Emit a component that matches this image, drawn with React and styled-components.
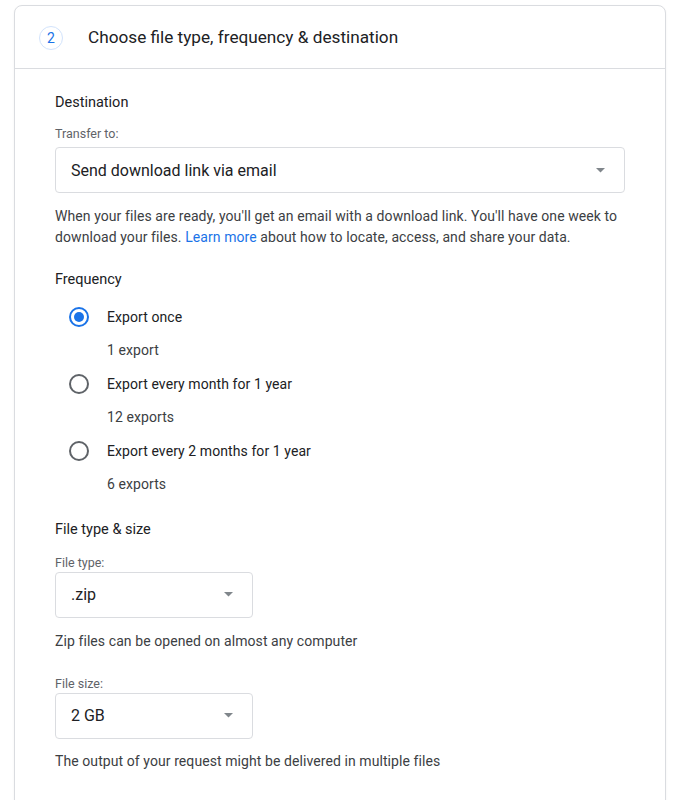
import React from 'react'
import styled, { createGlobalStyle } from 'styled-components'

const GlobalStyle = createGlobalStyle`
  body {
    margin: 0;
    background: #fff;
    font-family: Roboto, "Liberation Sans", Arial, sans-serif;
    color: #3c4043;
  }
`

const frequencies = [
  { label: 'Export once', sub: '1 export', checked: true },
  { label: 'Export every month for 1 year', sub: '12 exports' },
  { label: 'Export every 2 months for 1 year', sub: '6 exports' },
]

function Arrow() {
  return (
    <svg width="9" height="5" viewBox="0 0 9 5">
      <path d="M0 0 L9 0 L4.5 4.5 Z" fill="#80868b" />
    </svg>
  )
}

function Select({ value, width }) {
  return (
    <SelectBox width={width}>
      <span>{value}</span>
      <Arrow />
    </SelectBox>
  )
}

export default function App() {
  return (
    <>
      <GlobalStyle />
      <Page>
        <Card>
          <Header>
            <StepBadge>2</StepBadge>
            <Title>Choose file type, frequency &amp; destination</Title>
          </Header>
          <Body>
            <SectionTitle>Destination</SectionTitle>
            <FieldLabel gap={12}>Transfer to:</FieldLabel>
            <Select value="Send download link via email" />
            <Description gap={13}>
              When your files are ready, you'll get an email with a download link. You'll have one week to
              download your files. <a href="#">Learn more</a> about how to locate, access, and share your data.
            </Description>

            <SectionTitle gap={21}>Frequency</SectionTitle>
            <RadioList>
              {frequencies.map((f) => (
                <React.Fragment key={f.label}>
                  <RadioRow>
                    <Radio checked={f.checked} />
                    <span>{f.label}</span>
                  </RadioRow>
                  <SubLine>{f.sub}</SubLine>
                </React.Fragment>
              ))}
            </RadioList>

            <SectionTitle gap={17}>File type &amp; size</SectionTitle>
            <FieldLabel gap={14} tight>File type:</FieldLabel>
            <Select value=".zip" width={198} />
            <Hint gap={13}>Zip files can be opened on almost any computer</Hint>

            <FieldLabel gap={25} tight>File size:</FieldLabel>
            <Select value="2 GB" width={198} />
            <Hint gap={12}>The output of your request might be delivered in multiple files</Hint>
          </Body>
        </Card>
      </Page>
    </>
  )
}

const Page = styled.div`
  padding: 5px 14px 0;
  height: 800px;
  overflow: hidden;
  box-sizing: border-box;
`

const Card = styled.div`
  border: 1px solid #dadce0;
  border-radius: 8px;
  background: #fff;
  box-shadow: 0 1px 2px rgba(60, 64, 67, 0.08);
  min-height: 900px;
`

const Header = styled.div`
  display: flex;
  align-items: center;
  height: 62px;
  padding-left: 24px;
  border-bottom: 1px solid #dadce0;
`

const StepBadge = styled.div`
  width: 22px;
  height: 22px;
  border-radius: 50%;
  border: 1px solid #d2e3fc;
  color: #1a73e8;
  font-size: 14px;
  display: flex;
  align-items: center;
  justify-content: center;
  margin-right: 25px;
  margin-top: 1px;
`

const Title = styled.div`
  font-size: 17.2px;
  color: #202124;
`

const Body = styled.div`
  padding: 23px 40px 0;
`

const SectionTitle = styled.div`
  font-size: 14.5px;
  line-height: 22px;
  color: #202124;
  margin-top: ${(p) => p.gap || 0}px;
`

const FieldLabel = styled.div`
  font-size: 12.5px;
  line-height: 16px;
  color: #5f6368;
  margin-top: ${(p) => p.gap || 0}px;
  margin-bottom: ${(p) => (p.tight ? 1 : 5)}px;
`

const SelectBox = styled.div`
  box-sizing: border-box;
  height: 46px;
  width: ${(p) => (p.width ? `${p.width}px` : '100%')};
  border: 1px solid #dadce0;
  border-radius: 4px;
  display: flex;
  align-items: center;
  justify-content: space-between;
  padding: 0 19px 0 15px;
  font-size: 16px;
  color: #202124;
`

const Description = styled.div`
  font-size: 14px;
  line-height: 21px;
  letter-spacing: 0.08px;
  margin-top: ${(p) => p.gap || 0}px;

  a {
    color: #1a73e8;
    text-decoration: none;
  }
`

const Hint = styled.div`
  font-size: 14px;
  line-height: 20px;
  letter-spacing: 0.08px;
  margin-top: ${(p) => p.gap || 0}px;
`

const RadioList = styled.div`
  margin-top: 9px;
  padding-left: 14px;
`

const RadioRow = styled.div`
  display: flex;
  align-items: center;
  height: 33.6px;
  font-size: 14px;
  letter-spacing: 0.08px;
  color: #202124;
`

const Radio = styled.span`
  box-sizing: border-box;
  width: 20px;
  height: 20px;
  border-radius: 50%;
  border: 2px solid ${(p) => (p.checked ? '#1a73e8' : '#5f6368')};
  margin-right: 18px;
  display: flex;
  align-items: center;
  justify-content: center;

  &::after {
    content: '';
    width: 10px;
    height: 10px;
    border-radius: 50%;
    background: ${(p) => (p.checked ? '#1a73e8' : 'transparent')};
  }
`

const SubLine = styled.div`
  height: 33.6px;
  line-height: 33.6px;
  padding-left: 38px;
  font-size: 14px;
  letter-spacing: 0.08px;
  color: #3c4043;
`
